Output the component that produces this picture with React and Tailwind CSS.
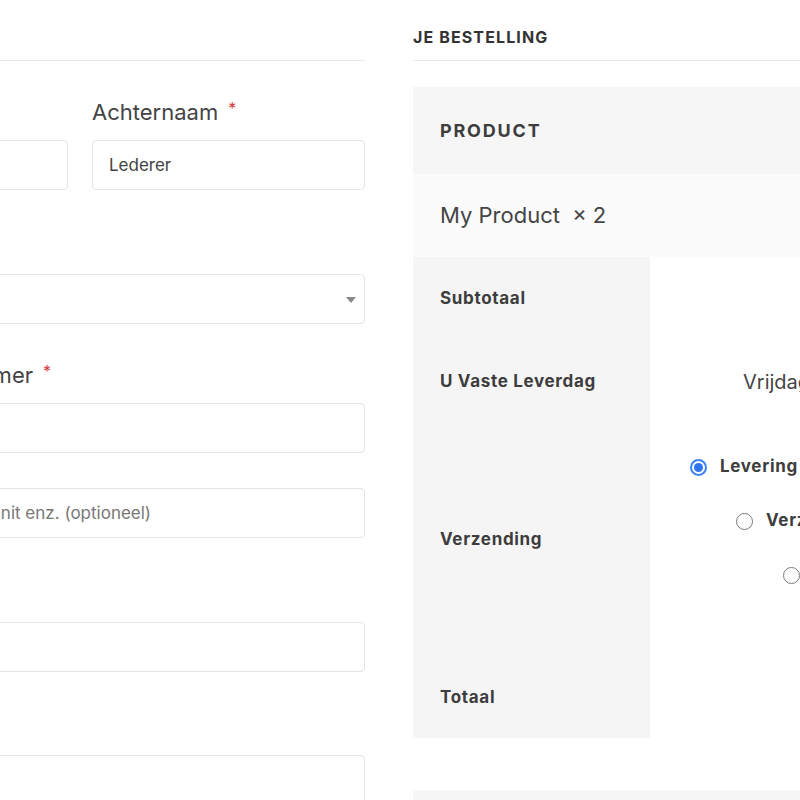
import React from 'react';

const inputCls =
  "w-full h-[50px] rounded-[4px] border border-[#e3e3e3] bg-white px-4 text-[17px] text-[#444] placeholder:text-[#777] outline-none";

function Label({ children, required }) {
  return (
    <label className="block h-[30px] text-[22px] leading-[30px] text-[#444] mb-[13px] whitespace-nowrap">
      {children}
      {required && (
        <span className="inline-block align-top leading-none ml-[10px] mt-[3px] text-[16px] text-[#d9383b]">*</span>
      )}
    </label>
  );
}

function Radio({ checked }) {
  if (checked) {
    return (
      <span className="inline-flex w-[17px] h-[17px] shrink-0 rounded-full border-2 border-[#3b82f6] items-center justify-center bg-white">
        <span className="w-[9px] h-[9px] rounded-full bg-[#2f74f0]" />
      </span>
    );
  }
  return <span className="inline-block w-[17px] h-[17px] shrink-0 rounded-full border border-[#7a7a7a] bg-white" />;
}

function ShippingOption({ checked, label, offset }) {
  return (
    <li className={`flex items-center h-[54px] gap-[13px] whitespace-nowrap ${offset}`}>
      <Radio checked={checked} />
      <span className="text-[17px] font-bold tracking-[0.04em] text-[#3d3d3d]">{label}</span>
    </li>
  );
}

function BillingForm() {
  return (
    <div className="w-[570px] shrink-0">
      <div className="pt-[26px] pb-[12px] border-b border-[#e8e8e8]">
        <h3 className="text-[16px] leading-[22px] font-bold tracking-[0.06em] text-[#333]">FACTUURGEGEVENS</h3>
      </div>

      <div className="grid grid-cols-2 gap-6 mt-[36px]">
        <div>
          <Label required>Voornaam</Label>
          <input className={inputCls} defaultValue="Hans" />
        </div>
        <div>
          <Label required>Achternaam</Label>
          <input className={inputCls} defaultValue="Lederer" />
        </div>
      </div>

      <div className="mt-[41px]">
        <Label required>Land/Regio</Label>
        <div className="relative h-[50px] rounded-[4px] border border-[#e3e3e3] bg-white">
          <span className="absolute right-[8px] top-[22px] w-0 h-0 border-l-[5px] border-r-[5px] border-t-[6px] border-l-transparent border-r-transparent border-t-[#888]" />
        </div>
      </div>

      <div className="mt-[36px]">
        <Label required>Straat- en huisnummer</Label>
        <input className={inputCls} />
        <input className={`${inputCls} mt-[35px]`} placeholder="Appartement, suite of unit enz. (optioneel)" />
      </div>

      <div className="mt-[41px]">
        <Label required>Postcode</Label>
        <input className={inputCls} />
      </div>

      <div className="mt-[40px]">
        <Label required>Plaats</Label>
        <input className={inputCls} />
      </div>
    </div>
  );
}

function OrderReview() {
  const th = "bg-[#f5f5f5] w-[237px] pl-[27px] text-left text-[17px] font-bold tracking-[0.04em] text-[#3d3d3d]";
  return (
    <div className="w-[700px] shrink-0">
      <div className="pt-[26px] pb-[12px] border-b border-[#e8e8e8]">
        <h3 className="text-[16px] leading-[22px] font-bold tracking-[0.07em] text-[#333]">JE BESTELLING</h3>
      </div>

      <table className="w-full mt-[26px] border-collapse">
        <thead>
          <tr className="h-[87px] bg-[#f6f6f6]">
            <th className="w-[237px] pl-[27px] text-left text-[18px] font-bold tracking-[0.1em] text-[#3d3d3d]">PRODUCT</th>
            <th className="pr-[27px] text-right text-[18px] font-bold tracking-[0.1em] text-[#3d3d3d]">SUBTOTAAL</th>
          </tr>
        </thead>
        <tbody>
          <tr className="h-[83px] bg-[#fbfbfb]">
            <td className="pl-[27px] text-[22px] text-[#444] whitespace-nowrap">
              My Product <span className="ml-[6px]">× 2</span>
            </td>
            <td className="pr-[27px] text-right text-[20px]">€ 39,90</td>
          </tr>
        </tbody>
        <tfoot>
          <tr className="h-[83px]">
            <th className={th}>Subtotaal</th>
            <td className="pr-[27px] text-right text-[20px]">€ 39,90</td>
          </tr>
          <tr className="h-[83px]">
            <th className={th}>U Vaste Leverdag</th>
            <td className="pl-[93px] text-[20px] text-[#444]">Vrijdag</td>
          </tr>
          <tr className="h-[234px]">
            <th className={th}>Verzending</th>
            <td className="align-top pt-[17px]">
              <ul>
                <ShippingOption checked label="Levering aan huis" offset="pl-[40px]" />
                <ShippingOption label="Verzending" offset="pl-[86px]" />
                <ShippingOption label="Ophalen" offset="pl-[133px]" />
              </ul>
            </td>
          </tr>
          <tr className="h-[81px]">
            <th className={th}>Totaal</th>
            <td className="pr-[27px] text-right text-[20px] font-bold">€ 39,90</td>
          </tr>
        </tfoot>
      </table>

      <div className="mt-[52px] h-[200px] bg-[#f7f7f7]" />
    </div>
  );
}

export default function App() {
  return (
    <div className="w-[800px] h-[800px] overflow-hidden bg-white font-['Inter','Roboto',sans-serif] text-[#444]">
      <div className="flex gap-12 ml-[-205px]">
        <BillingForm />
        <OrderReview />
      </div>
    </div>
  );
}
